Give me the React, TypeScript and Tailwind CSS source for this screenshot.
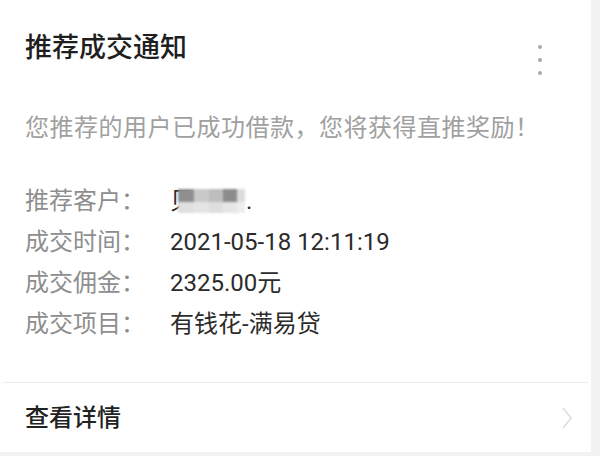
import React from "react";

const font = { fontFamily: "Roboto, 'Noto Sans CJK SC', sans-serif" };

function Row({ label, children }: { label: string; children: React.ReactNode }) {
  return (
    <div className="flex items-center h-[41px] leading-[41px]">
      <div className="w-[145px] text-[24px] text-[#8e8e8e]">{label}</div>
      <div className="text-[24px] text-[#2b2b2b]">{children}</div>
    </div>
  );
}

function Masked() {
  return (
    <div className="flex items-center h-[41px]">
      <span className="text-[24px] leading-[41px] text-[#2b2b2b]">贝</span>
      <div className="relative -ml-[16px] flex flex-col blur-[1.2px] mt-[-2px]">
        <div className="flex">
          <div className="w-[16px] h-[13px] bg-[#8f8f8f]" />
          <div className="w-[15px] h-[13px] bg-[#c9c9c9]" />
          <div className="w-[14px] h-[13px] bg-[#bdbdbd]" />
          <div className="w-[14px] h-[13px] bg-[#8c8c8c]" />
          <div className="w-[8px] h-[13px] bg-[#dcdcdc]" />
        </div>
        <div className="flex">
          <div className="w-[16px] h-[11px] bg-[#e0e0e0]" />
          <div className="w-[15px] h-[11px] bg-[#e4e4e4]" />
          <div className="w-[14px] h-[11px] bg-[#dedede]" />
          <div className="w-[14px] h-[11px] bg-[#e6e6e6]" />
          <div className="w-[8px] h-[11px] bg-[#eeeeee]" />
        </div>
      </div>
      <span className="text-[24px] leading-[41px] text-[#2b2b2b] ml-[1px]">.</span>
    </div>
  );
}

export default function App() {
  return (
    <div className="w-[600px] h-[456px] bg-[#f2f2f2] overflow-hidden" style={font}>
      <div className="w-[591px] h-[452px] bg-white flex flex-col">
        <div className="flex items-start justify-between pl-[25px] pr-[49px] pt-[31px] h-[75px]">
          <div className="text-[27px] leading-[34px] font-medium text-[#1f1f1f]">推荐成交通知</div>
          <div className="flex flex-col gap-[9px] pt-[14px]">
            <div className="w-[4px] h-[4px] rounded-full bg-[#a8a8a8]" />
            <div className="w-[4px] h-[4px] rounded-full bg-[#a8a8a8]" />
            <div className="w-[4px] h-[4px] rounded-full bg-[#a8a8a8]" />
          </div>
        </div>
        <div className="pl-[25px] mt-[37px] text-[24px] leading-[32px] text-[#a0a0a0] tracking-[0.5px]">
          您推荐的用户已成功借款，您将获得直推奖励！
        </div>
        <div className="pl-[25px] mt-[37px] flex flex-col">
          <div className="flex items-center h-[41px]">
            <div className="w-[145px] text-[24px] text-[#8e8e8e] leading-[41px]">推荐客户：</div>
            <Masked />
          </div>
          <Row label="成交时间：">2021-05-18 12:11:19</Row>
          <Row label="成交佣金：">2325.00元</Row>
          <Row label="成交项目：">有钱花-满易贷</Row>
        </div>
        <div className="mt-[37px] mx-[3px] h-px bg-[#ececec]" />
        <div className="flex-1 flex items-center justify-between pl-[25px] pr-[18px]">
          <div className="text-[24px] text-[#222] font-medium">查看详情</div>
          <svg width="12" height="24" viewBox="0 0 12 24" fill="none">
            <path d="M2 2 L10 12 L2 22" stroke="#dcdcdc" strokeWidth="1.5" />
          </svg>
        </div>
      </div>
    </div>
  );
}
